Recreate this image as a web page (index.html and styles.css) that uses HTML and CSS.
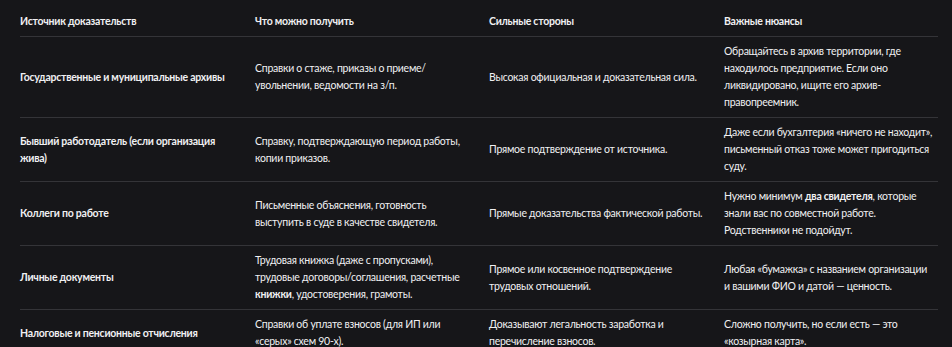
FILE: index.html
```html
<!DOCTYPE html>
<html lang="ru">
<head>
<meta charset="utf-8">
<link rel="stylesheet" href="styles.css">
</head>
<body>
<div class="wrap">
<table class="evidence">
  <colgroup>
    <col class="c1"><col class="c2"><col class="c3"><col class="c4">
  </colgroup>
  <thead>
    <tr>
      <th>Источник доказательств</th>
      <th>Что можно получить</th>
      <th>Сильные стороны</th>
      <th>Важные нюансы</th>
    </tr>
  </thead>
  <tbody>
    <tr>
      <td class="src">Государственные и муниципальные архивы</td>
      <td>Справки о стаже, приказы о приеме/увольнении, ведомости на з/п.</td>
      <td>Высокая официальная и доказательная сила.</td>
      <td>Обращайтесь в архив территории, где находилось предприятие. Если оно ликвидировано, ищите его архив-правопреемник.</td>
    </tr>
    <tr>
      <td class="src">Бывший работодатель (если организация жива)</td>
      <td>Справку, подтверждающую период работы, копии приказов.</td>
      <td>Прямое подтверждение от источника.</td>
      <td>Даже если бухгалтерия «ничего не находит», письменный отказ тоже может пригодиться суду.</td>
    </tr>
    <tr>
      <td class="src">Коллеги по работе</td>
      <td>Письменные объяснения, готовность выступить в суде в качестве свидетеля.</td>
      <td>Прямые доказательства фактической работы.</td>
      <td>Нужно минимум <b>два свидетеля</b>, которые знали вас по совместной работе. Родственники не подойдут.</td>
    </tr>
    <tr>
      <td class="src">Личные документы</td>
      <td>Трудовая книжка (даже с пропусками), трудовые договоры/соглашения, расчетные <b>книжки</b>, удостоверения, грамоты.</td>
      <td>Прямое или косвенное подтверждение трудовых отношений.</td>
      <td>Любая «бумажка» с названием организации и&nbsp;вашими ФИО и датой — ценность.</td>
    </tr>
    <tr>
      <td class="src">Налоговые и пенсионные отчисления</td>
      <td>Справки об уплате взносов (для ИП или «серых» схем 90-х).</td>
      <td>Доказывают легальность заработка и перечисление взносов.</td>
      <td>Сложно получить, но если есть — это «козырная карта».</td>
    </tr>
  </tbody>
</table>
</div>
</body>
</html>
```
FILE: styles.css
```css
html, body {
  margin: 0;
  padding: 0;
  background: #161619;
}
body {
  font-family: "Lato", "Noto Sans", sans-serif;
  font-size: 10.5px;
  line-height: 17px;
  letter-spacing: -0.25px;
  color: #f0f0f2;
}
.wrap {
  padding: 7px 14px 0 20px;
}
.evidence {
  width: 918px;
  border-collapse: collapse;
  table-layout: fixed;
}
.c1 { width: 235px; }
.c2 { width: 234px; }
.c3 { width: 235px; }
.c4 { width: 214px; }
.evidence th,
.evidence td {
  padding: 6px 12px 6px 0;
  text-align: left;
  vertical-align: middle;
  border-bottom: 1px solid #343438;
}
.evidence th:last-child,
.evidence td:last-child {
  padding-right: 0;
}
.evidence th {
  font-weight: 700;
}
.evidence td.src {
  font-weight: 700;
}
.evidence b {
  font-weight: 700;
}
```
